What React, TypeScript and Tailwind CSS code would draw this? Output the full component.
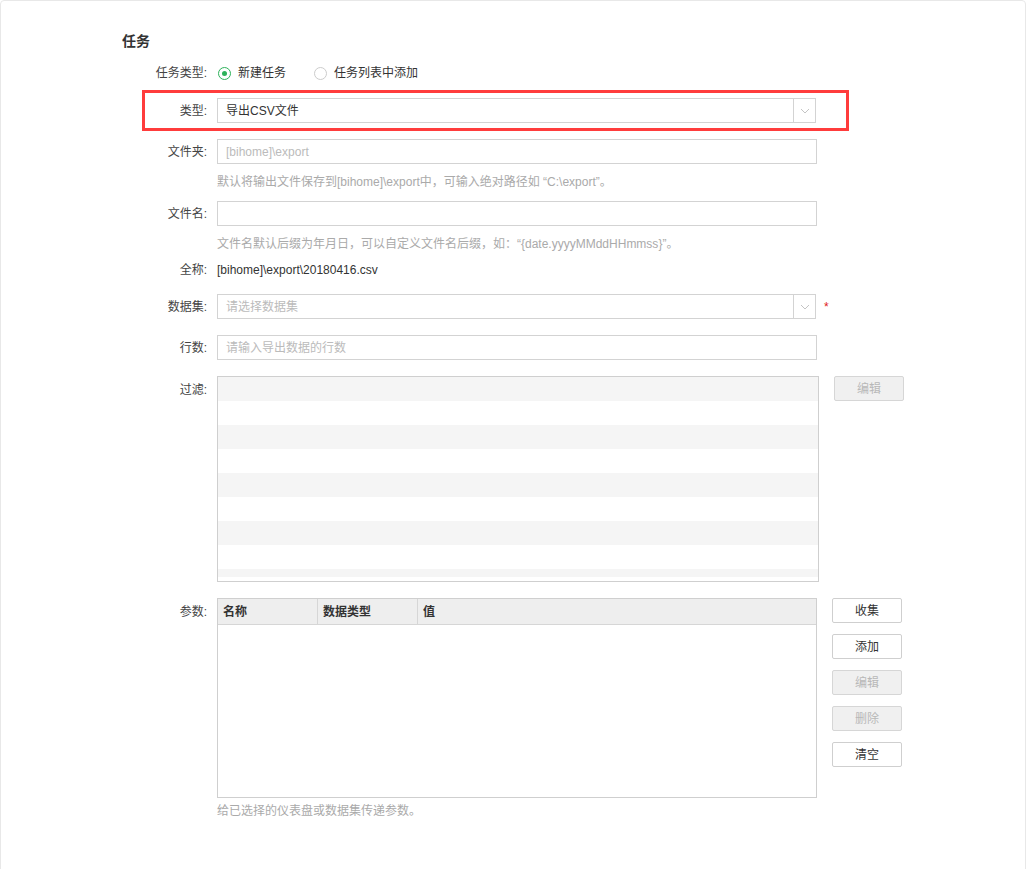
import React from "react";

const font = {
  fontFamily: '"Liberation Sans", "Noto Sans CJK SC", sans-serif',
};

const Label: React.FC<{ text: string; className?: string }> = ({ text, className }) => (
  <div className={`w-[100px] shrink-0 pr-[10px] text-right text-[12px] text-[#444] ${className ?? ""}`}>
    {text}:
  </div>
);

const Chevron: React.FC = () => (
  <svg width="10" height="6" viewBox="0 0 10 6" fill="none">
    <path d="M1 1l4 4 4-4" stroke="#c4c4c4" strokeWidth="1" />
  </svg>
);

const SelectBox: React.FC<{ value?: string; placeholder?: string }> = ({ value, placeholder }) => (
  <div className="flex h-[25px] w-[599px] items-center border border-[#d3d3d3] bg-white">
    <div
      className={`flex-1 px-[8px] text-[12px] ${value ? "text-[#333]" : "text-[#bbb]"}`}
    >
      {value ?? placeholder}
    </div>
    <div className="flex h-full w-[22px] items-center justify-center border-l border-[#d3d3d3]">
      <Chevron />
    </div>
  </div>
);

const TextBox: React.FC<{ placeholder?: string }> = ({ placeholder }) => (
  <div className="flex h-[25px] w-[600px] items-center border border-[#d3d3d3] bg-white px-[8px] text-[12px] text-[#bbb]">
    {placeholder}
  </div>
);

const Btn: React.FC<{ text: string; disabled?: boolean }> = ({ text, disabled }) => (
  <div
    className={`flex h-[25px] w-[70px] items-center justify-center rounded-[2px] border text-[12px] ${
      disabled
        ? "border-[#d6d6d6] bg-[#f0f0f0] text-[#b8b8b8]"
        : "border-[#cfcfcf] bg-white text-[#333]"
    }`}
  >
    {text}
  </div>
);

const Radio: React.FC<{ checked?: boolean; text: string }> = ({ checked, text }) => (
  <div className="flex items-center gap-[7px]">
    <div
      className={`flex h-[13px] w-[13px] items-center justify-center rounded-full border ${
        checked ? "border-[#2db25a]" : "border-[#cccccc]"
      }`}
    >
      {checked && <div className="h-[5px] w-[5px] rounded-full bg-[#2db25a]" />}
    </div>
    <span className="text-[12px] text-[#333]">{text}</span>
  </div>
);

export default function App() {
  const stripes = Array.from({ length: 9 });

  return (
    <div className="min-h-screen bg-white" style={font}>
      <div className="min-h-[900px] rounded-[4px] border border-[#e8e8e8] bg-white pl-[116px] pt-[30px]">
        {/* Title */}
        <div className="ml-[5px] h-[20px] text-[14px] font-bold leading-[20px] text-[#333]">任务</div>

        {/* Task type */}
        <div className="mt-[12px] flex h-[20px] items-center">
          <Label text="任务类型" />
          <div className="flex items-center gap-[28px] pl-[1px]">
            <Radio checked text="新建任务" />
            <Radio text="任务列表中添加" />
          </div>
        </div>

        {/* Type (highlighted) */}
        <div className="ml-[25px] mt-[7px] flex h-[41px] w-[707px] items-center border-[3px] border-[#ff3c3c]">
          <div className="w-[72px] shrink-0 pr-[10px] text-right text-[12px] text-[#444]">类型:</div>
          <div>
            <SelectBox value="导出CSV文件" />
          </div>
        </div>

        {/* Folder */}
        <div className="mt-[8px] flex items-center">
          <Label text="文件夹" />
          <TextBox placeholder="[bihome]\export" />
        </div>
        <div className="ml-[100px] mt-[9px] h-[18px] text-[12px] leading-[18px] text-[#aaa]">
          默认将输出文件保存到[bihome]\export中，可输入绝对路径如 “C:\export”。
        </div>

        {/* File name */}
        <div className="mt-[10px] flex items-center">
          <Label text="文件名" />
          <TextBox />
        </div>
        <div className="ml-[100px] mt-[9px] h-[18px] text-[12px] leading-[18px] text-[#aaa]">
          文件名默认后缀为年月日，可以自定义文件名后缀，如：“{"{"}date.yyyyMMddHHmmss{"}"}”。
        </div>

        {/* Full name */}
        <div className="mt-[8px] flex h-[18px] items-center">
          <Label text="全称" />
          <div className="text-[12px] text-[#333]">[bihome]\export\20180416.csv</div>
        </div>

        {/* Dataset */}
        <div className="mt-[15px] flex items-center">
          <Label text="数据集" />
          <SelectBox placeholder="请选择数据集" />
          <span className="ml-[8px] text-[12px] text-[#e02020]">*</span>
        </div>

        {/* Rows */}
        <div className="mt-[16px] flex items-center">
          <Label text="行数" />
          <TextBox placeholder="请输入导出数据的行数" />
        </div>

        {/* Filter */}
        <div className="mt-[16px] flex items-start">
          <Label text="过滤" className="pt-[5px]" />
          <div className="flex h-[206px] w-[602px] flex-col overflow-hidden border border-[#cfcfcf]">
            {stripes.map((_, i) => (
              <div
                key={i}
                className={`shrink-0 ${i === 8 ? "h-[8px]" : "h-[24px]"} ${
                  i % 2 === 0 ? "bg-[#f5f5f5]" : "bg-white"
                }`}
              />
            ))}
          </div>
          <div className="ml-[15px]">
            <Btn text="编辑" disabled />
          </div>
        </div>

        {/* Params */}
        <div className="mt-[16px] flex items-start">
          <Label text="参数" className="pt-[5px]" />
          <div className="flex h-[200px] w-[600px] flex-col border border-[#cfcfcf]">
            <div className="flex h-[26px] items-center border-b border-[#d6d6d6] bg-[#eeeeee] text-[12px] font-bold text-[#333]">
              <div className="flex h-full w-[100px] items-center border-r border-[#d6d6d6] px-[5px]">名称</div>
              <div className="flex h-full w-[100px] items-center border-r border-[#d6d6d6] px-[5px]">数据类型</div>
              <div className="flex h-full flex-1 items-center px-[5px]">值</div>
            </div>
            <div className="flex-1 bg-white" />
          </div>
          <div className="ml-[15px] flex flex-col gap-[11px]">
            <Btn text="收集" />
            <Btn text="添加" />
            <Btn text="编辑" disabled />
            <Btn text="删除" disabled />
            <Btn text="清空" />
          </div>
        </div>
        <div className="ml-[100px] mt-[4px] h-[18px] text-[12px] leading-[18px] text-[#aaa]">
          给已选择的仪表盘或数据集传递参数。
        </div>
      </div>
    </div>
  );
}
